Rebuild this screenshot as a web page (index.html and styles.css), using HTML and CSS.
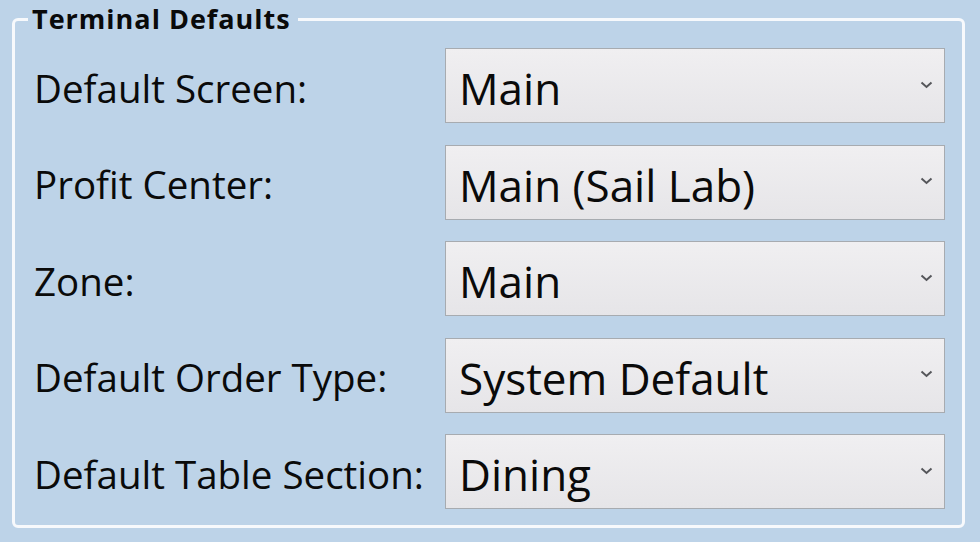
FILE: index.html
```html
<!DOCTYPE html>
<html>
<head>
<meta charset="utf-8">
<link rel="stylesheet" href="styles.css">
</head>
<body>
<div class="page">
  <fieldset class="group">
    <legend class="group-title">Terminal Defaults</legend>
    <div class="form">
      <div class="label">Default Screen:</div>
      <div class="select"><span class="value">Main</span><svg class="chev" width="13" height="8" viewBox="0 0 13 8"><path d="M1.5 1.5 L6.5 6 L11.5 1.5" fill="none" stroke="#55565a" stroke-width="2"/></svg></div>

      <div class="label">Profit Center:</div>
      <div class="select"><span class="value">Main (Sail Lab)</span><svg class="chev" width="13" height="8" viewBox="0 0 13 8"><path d="M1.5 1.5 L6.5 6 L11.5 1.5" fill="none" stroke="#55565a" stroke-width="2"/></svg></div>

      <div class="label">Zone:</div>
      <div class="select"><span class="value">Main</span><svg class="chev" width="13" height="8" viewBox="0 0 13 8"><path d="M1.5 1.5 L6.5 6 L11.5 1.5" fill="none" stroke="#55565a" stroke-width="2"/></svg></div>

      <div class="label">Default Order Type:</div>
      <div class="select"><span class="value">System Default</span><svg class="chev" width="13" height="8" viewBox="0 0 13 8"><path d="M1.5 1.5 L6.5 6 L11.5 1.5" fill="none" stroke="#55565a" stroke-width="2"/></svg></div>

      <div class="label">Default Table Section:</div>
      <div class="select"><span class="value">Dining</span><svg class="chev" width="13" height="8" viewBox="0 0 13 8"><path d="M1.5 1.5 L6.5 6 L11.5 1.5" fill="none" stroke="#55565a" stroke-width="2"/></svg></div>
    </div>
  </fieldset>
</div>
</body>
</html>
```
FILE: styles.css
```css
html, body {
  margin: 0;
  padding: 0;
  background: #bdd3e8;
  width: 980px;
  height: 542px;
  overflow: hidden;
}
.page {
  padding: 4px 15px 0 12px;
  font-family: "Open Sans", "Noto Sans", sans-serif;
  color: #0a0a0a;
}
.group {
  margin: 0;
  width: 953px;
  height: 524px;
  box-sizing: border-box;
  border: 3px solid #f7f9fc;
  border-radius: 6px;
  padding: 0 15px 0 19px;
}
.group-title {
  font-weight: 700;
  font-size: 27px;
  line-height: 30px;
  padding: 0 7px 0 4px;
  margin-left: -6px;
  letter-spacing: 1px;
}
.form {
  display: grid;
  grid-template-columns: 411px 500px;
  grid-auto-rows: 75px;
  row-gap: 21.5px;
  margin-top: 14px;
}
.label {
  display: flex;
  align-items: center;
  padding-top: 4px;
  font-size: 38.5px;
  white-space: nowrap;
}
.select {
  display: flex;
  align-items: center;
  box-sizing: border-box;
  border: 1px solid #a7abb0;
  background: linear-gradient(#f0eff1, #e6e5e8);
  padding: 5px 11px 0 13px;
}
.value {
  flex: 1;
  font-size: 44px;
  white-space: nowrap;
}
.chev {
  margin-top: -7px;
}
```
